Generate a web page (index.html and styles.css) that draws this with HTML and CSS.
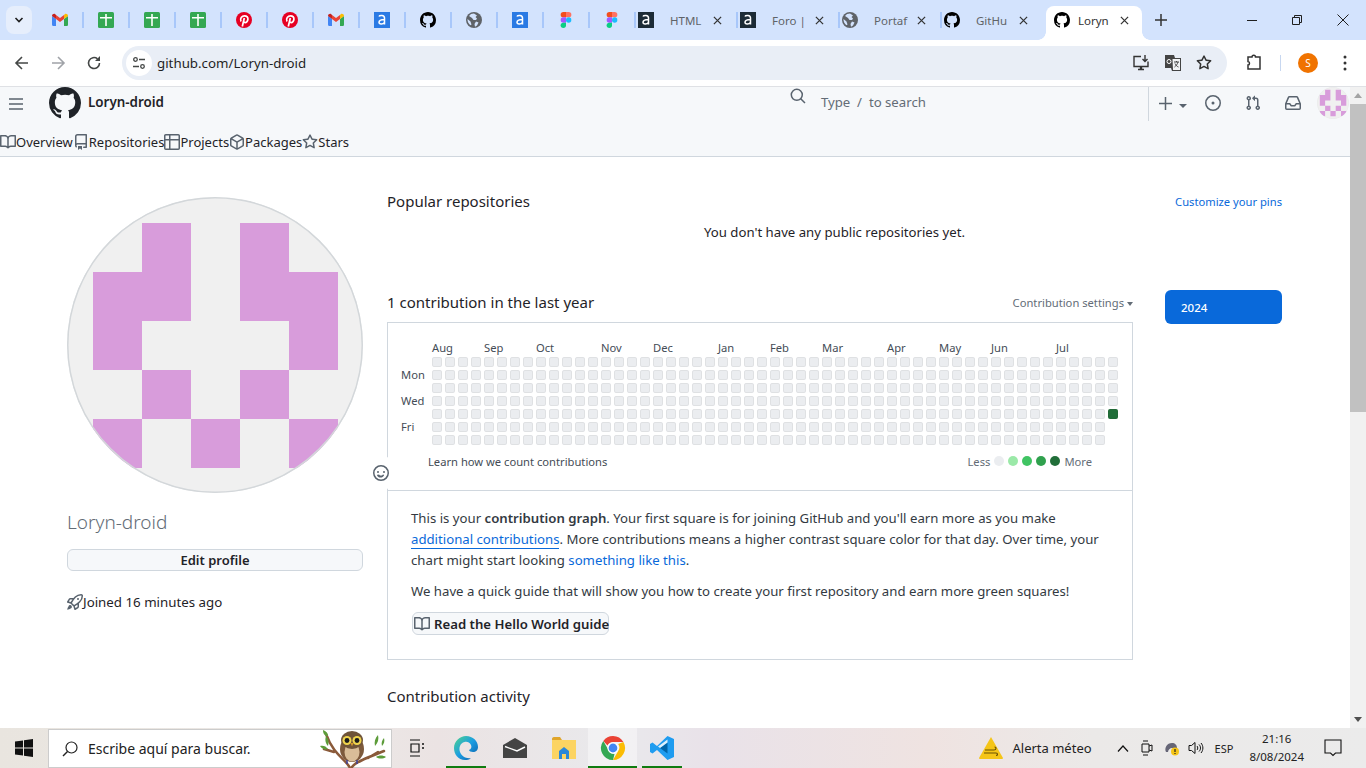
FILE: index.html
```html
<!DOCTYPE html>
<html lang="es">

<head>
    <meta charset="UTF-8" />
    <meta name="viewport" content="width=device-width, initial-scale=1.0" />
    <title>Loryn-droid</title>
    <link rel="stylesheet" href="styles.css">
</head>

<body>
    <!-- Shared icons -->
    <svg class="sprite" aria-hidden="true">
        <symbol id="i-github" viewBox="0 0 16 16"><path d="M8 0c4.42 0 8 3.58 8 8a8.013 8.013 0 0 1-5.45 7.59c-.4.08-.55-.17-.55-.38 0-.27.01-1.13.01-2.2 0-.75-.25-1.23-.54-1.48 1.78-.2 3.65-.88 3.65-3.95 0-.88-.31-1.59-.82-2.15.08-.2.36-1.02-.08-2.12 0 0-.67-.22-2.2.82-.64-.18-1.32-.27-2-.27-.68 0-1.36.09-2 .27-1.53-1.03-2.2-.82-2.2-.82-.44 1.1-.16 1.92-.08 2.12-.51.56-.82 1.28-.82 2.15 0 3.06 1.86 3.75 3.64 3.95-.23.2-.44.55-.51 1.07-.46.21-1.61.55-2.33-.66-.15-.24-.6-.83-1.23-.82-.67.01-.27.38.01.53.34.19.73.9.82 1.13.16.45.68 1.31 2.69.94 0 .67.01 1.3.01 1.49 0 .21-.15.45-.55.38A7.995 7.995 0 0 1 0 8c0-4.42 3.58-8 8-8Z"/></symbol>
        <symbol id="i-book" viewBox="0 0 16 16"><path d="M0 1.75A.75.75 0 0 1 .75 1h4.253c1.227 0 2.317.59 3 1.501A3.743 3.743 0 0 1 11.006 1h4.245a.75.75 0 0 1 .75.75v10.5a.75.75 0 0 1-.75.75h-4.507a2.25 2.25 0 0 0-1.591.659l-.622.621a.75.75 0 0 1-1.06 0l-.622-.621A2.25 2.25 0 0 0 5.258 13H.75a.75.75 0 0 1-.75-.75Zm7.251 10.324.004-5.073-.002-2.253A2.25 2.25 0 0 0 5.003 2.5H1.5v9h3.757a3.75 3.75 0 0 1 1.994.574ZM8.755 4.75l-.004 7.322a3.752 3.752 0 0 1 1.992-.572H14.5v-9h-3.495a2.25 2.25 0 0 0-2.25 2.25Z"/></symbol>
        <symbol id="i-repo" viewBox="0 0 16 16"><path d="M2 2.5A2.5 2.5 0 0 1 4.5 0h8.75a.75.75 0 0 1 .75.75v12.5a.75.75 0 0 1-.75.75h-2.5a.75.75 0 0 1 0-1.5h1.75v-2h-8a1 1 0 0 0-.714 1.7.75.75 0 1 1-1.072 1.05A2.495 2.495 0 0 1 2 11.5Zm10.5-1h-8a1 1 0 0 0-1 1v6.708A2.486 2.486 0 0 1 4.5 9h8ZM5 12.25a.25.25 0 0 1 .25-.25h3.5a.25.25 0 0 1 .25.25v3.25a.25.25 0 0 1-.4.2l-1.45-1.087a.249.249 0 0 0-.3 0L5.4 15.7a.25.25 0 0 1-.4-.2Z"/></symbol>
        <symbol id="i-table" viewBox="0 0 16 16"><path d="M0 1.75C0 .784.784 0 1.75 0h12.5C15.216 0 16 .784 16 1.75v12.5A1.75 1.75 0 0 1 14.25 16H1.75A1.75 1.75 0 0 1 0 14.25ZM6.5 6.5v8h7.75a.25.25 0 0 0 .25-.25V6.5Zm8-1.5V1.75a.25.25 0 0 0-.25-.25H6.5V5Zm-13 1.5v7.75c0 .138.112.25.25.25H5v-8ZM5 5V1.5H1.75a.25.25 0 0 0-.25.25V5Z"/></symbol>
        <symbol id="i-package" viewBox="0 0 16 16"><path d="m8.878.392 5.25 3.045c.54.314.872.89.872 1.514v6.098a1.75 1.75 0 0 1-.872 1.514l-5.25 3.045a1.75 1.75 0 0 1-1.756 0l-5.25-3.045A1.75 1.75 0 0 1 1 11.049V4.951c0-.624.332-1.201.872-1.514L7.122.392a1.75 1.75 0 0 1 1.756 0ZM7.875 1.69l-4.63 2.685L8 7.133l4.755-2.758-4.63-2.685a.248.248 0 0 0-.25 0ZM2.5 5.677v5.372c0 .09.047.171.125.216l4.625 2.683V8.432Zm6.25 8.271 4.625-2.683a.25.25 0 0 0 .125-.216V5.677L8.75 8.432Z"/></symbol>
        <symbol id="i-star" viewBox="0 0 16 16"><path d="M8 .25a.75.75 0 0 1 .673.418l1.882 3.815 4.21.612a.75.75 0 0 1 .416 1.279l-3.046 2.97.719 4.192a.751.751 0 0 1-1.088.791L8 12.347l-3.766 1.98a.75.75 0 0 1-1.088-.79l.72-4.194L.818 6.374a.75.75 0 0 1 .416-1.28l4.21-.611L7.327.668A.75.75 0 0 1 8 .25Zm0 2.445L6.615 5.5a.75.75 0 0 1-.564.41l-3.097.45 2.24 2.184a.75.75 0 0 1 .216.664l-.528 3.084 2.769-1.456a.75.75 0 0 1 .698 0l2.77 1.456-.53-3.084a.75.75 0 0 1 .216-.664l2.24-2.183-3.096-.45a.75.75 0 0 1-.564-.41L8 2.694Z"/></symbol>
        <symbol id="i-rocket" viewBox="0 0 16 16"><path d="M14.064 0h.186C15.216 0 16 .784 16 1.75v.186a8.752 8.752 0 0 1-2.564 6.186l-.458.459c-.314.314-.641.616-.979.904v3.207c0 .608-.315 1.172-.833 1.49l-2.774 1.707a.749.749 0 0 1-1.11-.418l-.954-3.102a1.214 1.214 0 0 1-.145-.125L3.754 9.816a1.218 1.218 0 0 1-.124-.145L.528 8.717a.749.749 0 0 1-.418-1.11l1.71-2.774A1.748 1.748 0 0 1 3.31 4h3.204c.288-.338.59-.665.904-.979l.459-.458A8.749 8.749 0 0 1 14.064 0ZM8.938 3.623h-.002l-.458.458c-.76.76-1.437 1.598-2.02 2.5l-1.5 2.317 2.143 2.143 2.317-1.5c.902-.583 1.74-1.26 2.499-2.02l.459-.458a7.25 7.25 0 0 0 2.123-5.127V1.75a.25.25 0 0 0-.25-.25h-.186a7.249 7.249 0 0 0-5.125 2.123ZM3.56 14.56c-.732.732-2.334 1.045-3.005 1.148a.234.234 0 0 1-.201-.064.234.234 0 0 1-.064-.201c.103-.671.416-2.273 1.15-3.003a1.75 1.75 0 1 1 2.12 2.12Zm6.94-3.935c-.088.06-.177.118-.266.175l-2.35 1.521.548 1.783 1.949-1.2a.25.25 0 0 0 .119-.213ZM3.678 8.116 5.2 5.766c.058-.09.117-.178.176-.266H3.309a.25.25 0 0 0-.213.119l-1.2 1.95ZM12 5a1 1 0 1 1-2 0 1 1 0 0 1 2 0Z"/></symbol>
        <symbol id="i-issue" viewBox="0 0 16 16"><path d="M8 9.5a1.5 1.5 0 1 0 0-3 1.5 1.5 0 0 0 0 3Z"/><path d="M8 0a8 8 0 1 1 0 16A8 8 0 0 1 8 0ZM1.5 8a6.5 6.5 0 1 0 13 0 6.5 6.5 0 0 0-13 0Z"/></symbol>
        <symbol id="i-pr" viewBox="0 0 16 16"><path d="M1.5 3.25a2.25 2.25 0 1 1 3 2.122v5.256a2.251 2.251 0 1 1-1.5 0V5.372A2.25 2.25 0 0 1 1.5 3.25Zm5.677-.177L9.573.677A.25.25 0 0 1 10 .854V2.5h1A2.5 2.5 0 0 1 13.5 5v5.628a2.251 2.251 0 1 1-1.5 0V5a1 1 0 0 0-1-1h-1v1.646a.25.25 0 0 1-.427.177L7.177 3.427a.25.25 0 0 1 0-.354ZM3.75 2.5a.75.75 0 1 0 0 1.5.75.75 0 0 0 0-1.5Zm0 9.5a.75.75 0 1 0 0 1.5.75.75 0 0 0 0-1.5Zm8.25.75a.75.75 0 1 0 1.5 0 .75.75 0 0 0-1.5 0Z"/></symbol>
        <symbol id="i-inbox" viewBox="0 0 16 16"><path d="M2.8 2.06A1.75 1.75 0 0 1 4.41 1h7.18c.7 0 1.333.417 1.61 1.06l2.74 6.395c.04.093.06.194.06.295v4.5A1.75 1.75 0 0 1 14.25 15H1.75A1.75 1.75 0 0 1 0 13.25v-4.5c0-.101.02-.202.06-.295Zm1.61.44a.25.25 0 0 0-.23.152L1.887 8H4.75a.75.75 0 0 1 .6.3L6.625 10h2.75l1.275-1.7a.75.75 0 0 1 .6-.3h2.863L11.82 2.652a.25.25 0 0 0-.23-.152Zm10.09 7h-2.875l-1.275 1.7a.75.75 0 0 1-.6.3h-3.5a.75.75 0 0 1-.6-.3L4.375 9.5H1.5v3.75c0 .138.112.25.25.25h12.5a.25.25 0 0 0 .25-.25Z"/></symbol>
        <symbol id="i-smiley" viewBox="0 0 16 16"><path d="M8 0a8 8 0 1 1 0 16A8 8 0 0 1 8 0ZM1.5 8a6.5 6.5 0 1 0 13 0 6.5 6.5 0 0 0-13 0Zm3.82 1.636a.75.75 0 0 1 1.038.175l.007.009c.103.118.22.222.35.31.264.178.683.37 1.285.37.602 0 1.02-.192 1.285-.371.13-.088.247-.192.35-.31l.007-.008a.75.75 0 0 1 1.222.87c-.16.23-.7.9-1.254 1.29-.63.418-1.37.638-2.127.629-.946 0-1.652-.308-2.126-.63a3.331 3.331 0 0 1-.715-.657.75.75 0 0 1 .683-1.677ZM12 7a1 1 0 1 1-2 0 1 1 0 0 1 2 0ZM5 8a1 1 0 1 1 0-2 1 1 0 0 1 0 2Z"/></symbol>
        <symbol id="f-gmail" viewBox="0 0 16 16"><path fill="#4285f4" d="M1 14h3V7L0 4v8.5C0 13.3.7 14 1 14Z"/><path fill="#34a853" d="M12 14h3c.6 0 1-.7 1-1.5V4l-4 3Z"/><path fill="#ea4335" d="M4 7V3l4 3 4-3v4L8 10Z"/><path fill="#c5221f" d="M0 4c0-2 2-2.600 3-2l1 1v4Z"/><path fill="#fbbc04" d="M12 3l1-1c1-.6 3 0 3 2l-4 3Z"/></symbol>
        <symbol id="f-sheet" viewBox="0 0 16 16"><rect width="16" height="16" rx="1.500" fill="#34a853"/><path fill="#fff" d="M2 5h5.200V2h1.600v3H14v1.500H8.800V14H7.200V6.500H2Z"/></symbol>
        <symbol id="f-pin" viewBox="0 0 16 16"><circle cx="8" cy="8" r="8" fill="#e60023"/><path fill="none" stroke="#fff" stroke-width="1.700" d="M5 9.500C3.500 6.500 6 3.800 8.500 3.800c2.400 0 3.700 1.700 3.400 3.700-.3 2-1.700 3.300-3 3-1-.2-1.300-1-1.100-2M8.300 6 6.300 14.500"/></symbol>
        <symbol id="f-alura" viewBox="0 0 16 16"><rect width="16" height="16" fill="#2a7ae4"/><path fill="none" stroke="#fff" stroke-width="1.500" d="M5 4.500c.5-1.300 5.500-1.800 5.500 1.500v6.500M10.500 7.500C7 7.500 5 8.500 5 10.300c0 2.200 4 2.300 5.500.2"/></symbol>
        <symbol id="f-alura-dark" viewBox="0 0 16 16"><rect width="16" height="16" fill="#1c2b36"/><path fill="none" stroke="#fff" stroke-width="1.500" d="M5 4.500c.5-1.300 5.500-1.800 5.500 1.500v6.500M10.500 7.500C7 7.500 5 8.500 5 10.300c0 2.200 4 2.300 5.500.2"/></symbol>
        <symbol id="f-globe" viewBox="0 0 16 16"><circle cx="8" cy="8" r="8" fill="#5f6368"/><path fill="#d3e3fd" d="M8 1.500 5 2 3 4l3 2 1.500 2H10l1-1.500L9.500 5 11 3.500ZM10 9.500l2.500 1-1.500 3-2 1.200-.5-2.700ZM1.500 7l3 2.500 1 3-1 .8C2.500 12 1.300 9.500 1.500 7Z"/></symbol>
        <symbol id="f-figma" viewBox="0 0 16 24"><path fill="#f24e1e" d="M8 0H4a4 4 0 0 0 0 8h4Z"/><path fill="#ff7262" d="M8 0h4a4 4 0 0 1 0 8H8Z"/><path fill="#a259ff" d="M8 8H4a4 4 0 0 0 0 8h4Z"/><circle cx="12" cy="12" r="4" fill="#1abcfe"/><path fill="#0acf83" d="M8 16H4a4 4 0 1 0 4 4Z"/></symbol>
        <symbol id="i-close" viewBox="0 0 10 10"><path fill="none" stroke="currentColor" stroke-width="1.400" d="m1 1 8 8M9 1 1 9"/></symbol>
    </svg>

    <div class="screen">
        <!-- Browser tabs -->
        <div class="tabstrip">
            <button class="tab-search" aria-label="Buscar pestañas">
                <svg width="10" height="10" viewBox="0 0 10 10"><path fill="none" stroke="#1f1f1f" stroke-width="1.600" d="m1.500 3 3.500 3.500L8.500 3"/></svg>
            </button>
            <div class="tab tab-pinned"><svg class="fav"><use href="#f-gmail"/></svg></div>
            <div class="tab tab-pinned"><svg class="fav"><use href="#f-sheet"/></svg></div>
            <div class="tab tab-pinned"><svg class="fav"><use href="#f-sheet"/></svg></div>
            <div class="tab tab-pinned"><svg class="fav"><use href="#f-sheet"/></svg></div>
            <div class="tab tab-pinned"><svg class="fav"><use href="#f-pin"/></svg></div>
            <div class="tab tab-pinned"><svg class="fav"><use href="#f-pin"/></svg></div>
            <div class="tab tab-pinned"><svg class="fav"><use href="#f-gmail"/></svg></div>
            <div class="tab tab-pinned"><svg class="fav"><use href="#f-alura"/></svg></div>
            <div class="tab tab-pinned"><svg class="fav"><use href="#i-github"/></svg></div>
            <div class="tab tab-pinned"><svg class="fav"><use href="#f-globe"/></svg></div>
            <div class="tab tab-pinned"><svg class="fav"><use href="#f-alura"/></svg></div>
            <div class="tab tab-pinned"><svg class="fav"><use href="#f-figma"/></svg></div>
            <div class="tab tab-pinned"><svg class="fav"><use href="#f-figma"/></svg></div>
            <div class="tab"><svg class="fav"><use href="#f-alura-dark"/></svg><span class="tab-title">HTML</span><svg class="tab-close"><use href="#i-close"/></svg></div>
            <div class="tab"><svg class="fav"><use href="#f-alura-dark"/></svg><span class="tab-title">Foro |</span><svg class="tab-close"><use href="#i-close"/></svg></div>
            <div class="tab"><svg class="fav"><use href="#f-globe"/></svg><span class="tab-title">Portaf</span><svg class="tab-close"><use href="#i-close"/></svg></div>
            <div class="tab"><svg class="fav"><use href="#i-github"/></svg><span class="tab-title">GitHu</span><svg class="tab-close"><use href="#i-close"/></svg></div>
            <div class="tab tab-active"><svg class="fav"><use href="#i-github"/></svg><span class="tab-title">Loryn</span><svg class="tab-close"><use href="#i-close"/></svg></div>
            <svg class="new-tab" width="12" height="12" viewBox="0 0 12 12"><path fill="none" stroke="#333" stroke-width="1.500" d="M6 0v12M0 6h12"/></svg>
            <div class="window-controls">
                <svg width="10" height="10" viewBox="0 0 10 10"><path stroke="#1f1f1f" d="M0 5.500h10"/></svg>
                <svg width="10" height="10" viewBox="0 0 10 10"><path fill="none" stroke="#1f1f1f" d="M.5 2.500h7v7h-7ZM2.500 2.500v-2h7v7h-2"/></svg>
                <svg width="12" height="12" viewBox="0 0 12 12"><path fill="none" stroke="#1f1f1f" d="m.5.500 11 11M11.500.500l-11 11"/></svg>
            </div>
        </div>

        <!-- Browser toolbar -->
        <div class="toolbar">
            <svg class="tool" width="16" height="16" viewBox="0 0 16 16"><path fill="none" stroke="#444746" stroke-width="1.600" d="M14 8H2.500M8 2 2 8l6 6"/></svg>
            <svg class="tool" width="16" height="16" viewBox="0 0 16 16"><path fill="none" stroke="#a0a3a8" stroke-width="1.600" d="M2 8h11.500M8 2l6 6-6 6"/></svg>
            <svg class="tool" width="16" height="16" viewBox="0 0 16 16"><path fill="none" stroke="#444746" stroke-width="1.600" d="M13.500 8A5.500 5.500 0 1 1 11.500 3.800"/><path fill="#444746" d="M14 1v5H9Z"/></svg>
            <div class="omnibox">
                <span class="site-info">
                    <svg width="14" height="14" viewBox="0 0 14 14"><g fill="none" stroke="#444746" stroke-width="1.300"><circle cx="3.500" cy="3.500" r="1.800"/><circle cx="10.500" cy="10.500" r="1.800"/><path d="M7 3.500h6M1 10.500h6"/></g></svg>
                </span>
                <span class="url">github.com/Loryn-droid</span>
                <span class="omni-icons">
                    <svg width="18" height="18" viewBox="0 0 18 18"><path fill="none" stroke="#333" stroke-width="1.400" d="M9 2.500H2v10h14v-5M6 15.500h6"/><path stroke="#333" stroke-width="2.400" d="M9 13v2.500"/><path fill="none" stroke="#333" stroke-width="1.400" d="M13 1v6M10.500 5 13 7.500 15.500 5"/></svg>
                    <svg width="18" height="18" viewBox="0 0 18 18"><path fill="#444" d="M1 1h9l1 3h6v13H8l-1-3H1Z"/><path fill="#f1f3f4" d="M8.500 5H16v11H9Z"/><path fill="none" stroke="#444" d="M10 8h5M12.500 7v1M14 8c-.5 2-2 4-3.500 5M11 9.500c.7 1.500 2 3 3.500 3.500"/><circle cx="5" cy="7.500" r="2" fill="none" stroke="#fff"/></svg>
                    <svg width="16" height="16"><use href="#i-star" fill="#333"/></svg>
                </span>
            </div>
            <svg class="ext" width="18" height="18" viewBox="0 0 18 18"><path fill="none" stroke="#333" stroke-width="1.500" d="M3 3h4c0-2.500 3.500-2.500 3.500 0H15v12H3v-4c2 0 2-3.500 0-3.500Z"/></svg>
            <span class="toolbar-sep"></span>
            <span class="account">S</span>
            <svg class="kebab" width="4" height="16" viewBox="0 0 4 16"><circle cx="2" cy="2" r="1.500"/><circle cx="2" cy="8" r="1.500"/><circle cx="2" cy="14" r="1.500"/></svg>
        </div>

        <!-- Page with scrollbar -->
        <div class="viewport">
            <div class="page">
                <header class="gh-header">
                    <div class="gh-top">
                        <svg class="burger" width="14" height="12" viewBox="0 0 14 12"><path stroke="#59636e" stroke-width="1.400" d="M0 1h14M0 6h14M0 11h14"/></svg>
                        <svg class="gh-logo"><use href="#i-github"/></svg>
                        <strong class="gh-user">Loryn-droid</strong>
                        <div class="gh-search">
                            <svg class="gh-search-icon" width="16" height="16" viewBox="0 0 16 16"><path fill="none" stroke="#59636e" stroke-width="1.500" d="M10.500 10.500 15 15"/><circle cx="6.800" cy="6.800" r="5.500" fill="none" stroke="#59636e" stroke-width="1.500"/></svg>
                            <span class="gh-search-text">Type &nbsp;/&nbsp; to search</span>
                        </div>
                        <div class="gh-actions">
                            <span class="gh-plus">
                                <svg width="13" height="13" viewBox="0 0 13 13"><path stroke="#59636e" stroke-width="1.500" d="M6.500 0v13M0 6.500h13"/></svg>
                                <svg class="gh-plus-caret" width="8" height="4" viewBox="0 0 8 4"><path fill="#59636e" d="M0 0h8L4 4Z"/></svg>
                            </span>
                            <svg class="gh-action"><use href="#i-issue"/></svg>
                            <svg class="gh-action"><use href="#i-pr"/></svg>
                            <svg class="gh-action"><use href="#i-inbox"/></svg>
                            <svg class="identicon identicon-small" viewBox="0 0 296 296"><use href="#identicon-art"/></svg>
                        </div>
                    </div>
                    <nav class="gh-nav">
                        <a href="#"><svg class="nav-icon"><use href="#i-book"/></svg>Overview</a>
                        <a href="#"><svg class="nav-icon"><use href="#i-repo"/></svg>Repositories</a>
                        <a href="#"><svg class="nav-icon"><use href="#i-table"/></svg>Projects</a>
                        <a href="#"><svg class="nav-icon"><use href="#i-package"/></svg>Packages</a>
                        <a href="#"><svg class="nav-icon"><use href="#i-star"/></svg>Stars</a>
                    </nav>
                </header>

                <div class="profile">
                    <aside class="sidebar">
                        <svg class="identicon identicon-large" viewBox="0 0 296 296">
                            <g id="identicon-art">
                                <rect width="296" height="296" fill="#f0f0f0"/>
                                <path fill="#d89cdb" d="M75 26h49v49H75ZM173 26h49v49h-49ZM26 75h98v49H26ZM173 75h98v49h-98ZM26 124h49v49H26ZM222 124h49v49h-49ZM75 173h49v49H75ZM173 173h49v49h-49ZM26 222h49v49H26ZM124 222h49v49h-49ZM222 222h49v49h-49Z"/>
                                <circle cx="148" cy="148" r="147.500" fill="none" stroke="#d3d7da" stroke-width="2"/>
                            </g>
                        </svg>
                        <h1 class="profile-name">Loryn-droid</h1>
                        <button class="btn btn-block">Edit profile</button>
                        <p class="joined"><svg class="nav-icon"><use href="#i-rocket"/></svg>Joined 16 minutes ago</p>
                    </aside>

                    <main class="content">
                        <div class="pins-head">
                            <h2 class="section-title">Popular repositories</h2>
                            <a class="pins-link" href="#">Customize your pins</a>
                        </div>
                        <p class="empty-note">You don't have any public repositories yet.</p>

                        <div class="contrib">
                            <div class="contrib-main">
                                <div class="contrib-head">
                                    <h2 class="section-title">1 contribution in the last year</h2>
                                    <span class="contrib-settings">Contribution settings<i class="caret"></i></span>
                                </div>
                                <div class="graph-box">
                                    <div class="graph-top">
                                        <div class="calendar" id="calendar"></div>
                                        <div class="graph-foot">
                                            <span>Learn how we count contributions</span>
                                            <span class="legend">Less
                                                <i class="swatch level-0"></i><i class="swatch level-1"></i><i class="swatch level-2"></i><i class="swatch level-3"></i><i class="swatch level-4"></i>
                                                More</span>
                                        </div>
                                    </div>
                                    <span class="emoji-btn"><svg class="nav-icon"><use href="#i-smiley"/></svg></span>
                                    <div class="graph-tip">
                                        <p>This is your <b>contribution graph</b>. Your first square is for joining GitHub and you'll earn more as you make <a class="link-under" href="#">additional contributions</a>. More contributions means a higher contrast square color for that day. Over time, your chart might start looking <a href="#">something like this</a>.</p>
                                        <p>We have a quick guide that will show you how to create your first repository and earn more green squares!</p>
                                        <button class="btn btn-guide"><svg class="nav-icon"><use href="#i-book"/></svg>Read the Hello World guide</button>
                                    </div>
                                </div>
                            </div>
                            <div class="year-list"><span class="year-active">2024</span></div>
                        </div>

                        <h2 class="section-title activity-title">Contribution activity</h2>
                    </main>
                </div>
            </div>
            <div class="scrollbar">
                <i class="arrow-up"></i>
                <span class="thumb"></span>
                <i class="arrow-down"></i>
            </div>
        </div>

        <!-- Windows taskbar -->
        <footer class="taskbar">
            <svg class="start" width="18" height="18" viewBox="0 0 18 18"><path fill="#111" d="M0 2.500 8 1.400v7.100H0ZM9 1.300 18 0v8.500H9ZM0 9.500h8v7.100L0 15.500ZM9 9.500h9V18L9 16.700Z"/></svg>
            <div class="task-search">
                <svg width="16" height="16" viewBox="0 0 16 16"><circle cx="9.500" cy="6.500" r="5.500" fill="none" stroke="#222" stroke-width="1.200"/><path stroke="#222" stroke-width="1.400" d="M5.500 10.500 1 15"/></svg>
                <span>Escribe aquí para buscar.</span>
                <svg class="owl" width="68" height="38" viewBox="0 0 68 38">
                    <path fill="none" stroke="#8a5a3a" stroke-width="2.500" stroke-linecap="round" d="M30 38C26 29 14 26 6 4M32 37c4-6 18-10 32-16M14 22 4 19M48 28l10-6"/>
                    <path fill="#5d9c3a" d="M3 0c3 1 5 3 5 6-3 0-5-2-5-6ZM6 6c3 3 3 6 2 10-3-3-3-7-2-10ZM58 5c1 4 0 8-3 11-1-4 0-8 3-11ZM64 8c1 3 0 6-2 8-1-3 0-6 2-8ZM0 16c3-1 6 0 8 3-3 1-6 0-8-3ZM56 27c3-2 7-2 10 0-3 2-7 2-10 0Z"/>
                    <ellipse cx="32" cy="19" rx="12" ry="13" fill="#7d5a3c"/>
                    <ellipse cx="32" cy="22" rx="7.500" ry="9.500" fill="#d9bd98"/>
                    <ellipse cx="32" cy="10" rx="11" ry="9" fill="#6f5338"/>
                    <circle cx="27" cy="10.500" r="4.500" fill="#efd34c"/><circle cx="37" cy="10.500" r="4.500" fill="#efd34c"/>
                    <circle cx="27" cy="10.500" r="2.400" fill="#1c1c1c"/><circle cx="37" cy="10.500" r="2.400" fill="#1c1c1c"/>
                    <path fill="#d99a2b" d="m30.500 13 1.500 3.500 1.500-3.500Z"/>
                    <path stroke="#3c3f9a" stroke-width="1.500" d="M27 30v4M37 30v4"/>
                </svg>
            </div>
            <div class="task-app task-view">
                <svg width="16" height="18" viewBox="0 0 16 18"><path fill="none" stroke="#111" stroke-width="1.200" d="M1 1h10M1 17h10M2 5h8v8H2Z"/><path stroke="#111" stroke-width="1.500" d="M14 4v2M14 8v2"/></svg>
            </div>
            <div class="task-app task-open">
                <svg width="26" height="26" viewBox="0 0 26 26"><defs><linearGradient id="edge" x1="0" y1="0" x2="1" y2="1"><stop offset="0" stop-color="#4fd58a"/><stop offset=".5" stop-color="#1b9de2"/><stop offset="1" stop-color="#0c59a4"/></linearGradient></defs><path fill="url(#edge)" d="M13 1c7 0 12 5 12 11 0 3-2 5-5 5-2 0-4-1-4-2 2-1 3-2.500 2-5C16.500 7 14 6.500 11.500 7 7 8 5.500 13 7 17c1.500 4 6 7 11 6-2 2-4 2-6 2C5 25 1 19 1 13 1 6 7 1 13 1Z"/></svg>
            </div>
            <div class="task-app">
                <svg width="24" height="20" viewBox="0 0 24 20"><path fill="#444" d="M0 7 12 0l12 7v13H0Z"/><path fill="none" stroke="#fff" stroke-width="1.400" d="M2 8.500 14 13 22 9"/></svg>
            </div>
            <div class="task-app">
                <svg width="24" height="22" viewBox="0 0 24 22"><path fill="#e0a52a" d="M0 2c0-1 .500-2 2-2h6l2 3h-10Z"/><path fill="#fcd462" d="M0 3h24v19H0Z"/><path fill="#2b88d8" d="M7 14l5-4 5 4v8h-3v-5h-4v5H7Z"/></svg>
            </div>
            <div class="task-app task-open task-chrome">
                <svg width="26" height="26" viewBox="0 0 26 26"><path fill="#ea4335" d="M13 1a12 12 0 0 1 10.400 6H13a6 6 0 0 0-5.500 3.600L3.300 5.900A12 12 0 0 1 13 1Z"/><path fill="#fbbc04" d="M23.400 7A12 12 0 0 1 13 25l5.200-9a6 6 0 0 0 0-7Z"/><path fill="#34a853" d="M3.300 5.900 8.500 15a6 6 0 0 0 6 4l-1.500 6A12 12 0 0 1 3.300 5.900Z"/><circle cx="13" cy="13" r="5" fill="#4285f4" stroke="#fff" stroke-width="1.200"/></svg>
            </div>
            <div class="task-app task-open">
                <svg width="24" height="24" viewBox="0 0 24 24"><path fill="#1f9cf0" d="M17.500 0 24 3v18l-6.500 3L7 14l-4.500 3.500L0 16V8l2.500-1.500L7 10Z"/><path fill="#0065a9" d="M17.500 6.500v11L10 12Z"/><path fill="#fff" opacity=".85" d="M17.500 6.500 10 12l-2-1.500L17.500 3.500Z"/></svg>
            </div>

            <div class="tray">
                <svg width="24" height="22" viewBox="0 0 24 22"><path fill="#f5c518" d="M12 0 24 21a1 1 0 0 1-1 1H1a1 1 0 0 1-1-1Z"/><path fill="none" stroke="#6b5200" stroke-width="1.200" d="M6 13h9c2.500 0 2.500-3 .5-3M5 16h12c2 0 2 2.500 0 2.500"/></svg>
                <span class="tray-alert">Alerta méteo</span>
                <svg class="tray-chevron" width="12" height="7" viewBox="0 0 12 7"><path fill="none" stroke="#111" stroke-width="1.200" d="m1 6.500 5-5.500 5 5.500"/></svg>
                <svg class="tray-icon tray-meet" width="12" height="16" viewBox="0 0 12 16"><path fill="none" stroke="#111" d="M1 4h7v8H1ZM8 6l3-1v6l-3-1M2 1h5M2 15h5"/></svg>
                <svg class="tray-icon tray-cloud" width="16" height="16" viewBox="0 0 16 16"><path fill="#667" d="M2 12c-2-4 1-9 6-9 3 0 5 2 5 5H8c-2 0-4 2-4 4Z"/><circle cx="11" cy="11.500" r="4" fill="#f5c518"/><path stroke="#222" stroke-width="1.200" d="M11 9v3M11 13v1"/></svg>
                <svg class="tray-icon tray-sound" width="16" height="16" viewBox="0 0 16 16"><path fill="none" stroke="#111" d="M1 5.500h2.500L7 2.500v11l-3.500-3H1ZM9 6c1 1 1 3 0 4M11 4.500c2 2 2 5 0 7M13 3c2.500 3 2.500 7 0 10"/></svg>
                <span class="tray-lang">ESP</span>
                <span class="tray-clock"><span>21:16</span><span>8/08/2024</span></span>
                <svg class="tray-notify" width="18" height="18" viewBox="0 0 18 18"><path fill="none" stroke="#111" stroke-width="1.100" d="M1 1h16v13h-5.500L9 16.500 6.500 14H1Z"/></svg>
            </div>
        </footer>
    </div>

    <script src="graph.js"></script>
</body>

</html>
```

FILE: styles.css
```css
/* Colors used by the GitHub page */
:root {
    --fg: #1f2328;
    --fg-muted: #636c76;
    --border: #d0d7de;
    --link: #0969da;
    --tabstrip: #d3e3fd;
}

* {
    box-sizing: border-box;
}

html,
body {
    margin: 0;
    height: 100%;
    overflow: hidden;
}

body {
    font-family: "Noto Sans", "Open Sans", sans-serif;
    font-size: 13.2px;
    color: var(--fg);
    background: #fff;
}

a {
    color: var(--link);
    text-decoration: none;
}

h1,
h2,
p {
    margin: 0;
    font-weight: 400;
}

.sprite {
    display: none;
}

.screen {
    display: flex;
    flex-direction: column;
    height: 768px;
}

/* Tabs */
.tabstrip {
    display: flex;
    align-items: center;
    flex: 0 0 40px;
    background: var(--tabstrip);
    padding-left: 6px;
}

.tab-search {
    all: unset;
    display: flex;
    align-items: center;
    justify-content: center;
    flex: 0 0 26px;
    height: 28px;
    margin-right: 5px;
    border-radius: 8px;
    background: #e6eefc;
}

.tab {
    display: flex;
    align-items: center;
    position: relative;
    flex: 0 0 102px;
    height: 34px;
    margin-top: 6px;
    padding: 0 15px 6px 3px;
    color: #5f6368;
    font-size: 11.5px;
}

/* Separator between tabs */
.tab::before {
    content: "";
    position: absolute;
    left: -1px;
    top: 6px;
    height: 16px;
    width: 2px;
    background: #a8c7fa;
}

.tab:first-of-type::before {
    display: none;
}

.tab-pinned {
    flex-basis: 46px;
    justify-content: center;
    padding: 0 0 6px;
}

.fav {
    flex: none;
    width: 16px;
    height: 16px;
}

.tab-title {
    flex: 1;
    margin-left: 16px;
    overflow: hidden;
    white-space: nowrap;
}

.tab-close {
    flex: none;
    width: 9px;
    height: 9px;
    color: #333;
}

.tab-active {
    flex-basis: 96px;
    margin-left: 3px;
    padding-left: 8px;
    padding-right: 13px;
    background: #fff;
    border-radius: 8px 8px 0 0;
    color: #333;
}

.tab-active .tab-title {
    margin-left: 8px;
}

/* Curved feet of the active tab */
.tab-active::before,
.tab-active::after {
    content: "";
    position: absolute;
    top: auto;
    bottom: 0;
    width: 8px;
    height: 8px;
}

.tab-active::before {
    left: -8px;
    background: radial-gradient(circle at 0 0, transparent 7.5px, #fff 8px);
}

.tab-active::after {
    right: -8px;
    background: radial-gradient(circle at 100% 0, transparent 7.5px, #fff 8px);
}

.tab-active + .new-tab {
    margin-left: 13px;
}

.window-controls {
    display: flex;
    align-items: center;
    gap: 35px;
    margin-left: auto;
    padding-right: 17px;
}

/* Toolbar */
.toolbar {
    display: flex;
    align-items: center;
    flex: 0 0 47px;
    background: #fff;
    border-bottom: 1px solid #dfe1e5;
    padding-left: 14px;
}

.tool {
    flex: none;
    margin-right: 20px;
}

.tool:nth-child(3) {
    margin-right: 21px;
}

.omnibox {
    display: flex;
    align-items: center;
    flex: 0 0 1105px;
    height: 34px;
    margin-left: -1px;
    border-radius: 17px;
    background: #e9eef6;
    padding: 0 15px 0 4px;
}

.site-info {
    display: flex;
    align-items: center;
    justify-content: center;
    width: 26px;
    height: 26px;
    border-radius: 50%;
    background: #fff;
}

.url {
    margin-left: 5px;
    color: #1f1f1f;
    font-size: 13.3px;
}

.omni-icons {
    display: flex;
    align-items: center;
    gap: 14px;
    margin-left: auto;
}

.ext {
    margin-left: 18px;
    flex: none;
}

.toolbar-sep {
    width: 1px;
    height: 16px;
    margin: 0 17px;
    background: #c7d7f0;
}

.account {
    display: flex;
    align-items: center;
    justify-content: center;
    width: 20px;
    height: 20px;
    border-radius: 50%;
    background: #f07300;
    color: #fff;
    font-size: 10px;
}

.kebab {
    margin-left: 25px;
    fill: #333;
}

/* Viewport */
.viewport {
    display: flex;
    flex: 1;
    min-height: 0;
}

.page {
    flex: 1;
    min-width: 0;
    overflow: hidden;
}

.scrollbar {
    display: flex;
    flex-direction: column;
    align-items: center;
    flex: 0 0 16px;
    background: #f1f1f1;
    padding-top: 6px;
}

.thumb {
    width: 100%;
    height: 308px;
    margin-top: 6px;
    background: #c1c1c1;
}

.arrow-up,
.arrow-down {
    width: 0;
    height: 0;
    border-left: 4px solid transparent;
    border-right: 4px solid transparent;
}

.arrow-up {
    border-bottom: 5px solid #a3a3a3;
}

.arrow-down {
    margin-top: auto;
    margin-bottom: 6px;
    border-top: 5px solid #505050;
}

/* GitHub header */
.gh-header {
    height: 70px;
    background: #f6f8fa;
    border-bottom: 1px solid var(--border);
}

.gh-top {
    display: flex;
    align-items: flex-start;
    height: 38px;
    padding-left: 9px;
}

.burger {
    margin-top: 11px;
}

.gh-logo {
    width: 32px;
    height: 32px;
    margin-left: 26px;
    fill: var(--fg);
}

.gh-user {
    margin-left: 7px;
    margin-top: 6px;
    font-size: 13.4px;
    font-weight: 600;
}

.gh-search {
    display: flex;
    flex: 0 0 359px;
    height: 34px;
    margin-left: 626px;
    border-right: 1px solid var(--border);
    color: var(--fg-muted);
}

.gh-search-icon {
    margin-top: 1px;
}

.gh-search-text {
    margin-left: 15px;
    margin-top: 6px;
}

.gh-actions {
    display: flex;
    align-items: center;
    margin-left: 10px;
    height: 32px;
}

.gh-plus {
    display: flex;
    align-items: center;
    gap: 7px;
}

.gh-plus-caret {
    margin-top: 5px;
}

.gh-action {
    width: 16px;
    height: 16px;
    margin-left: 24px;
    fill: #59636e;
}

.gh-plus + .gh-action {
    margin-left: 18px;
}

.identicon {
    border-radius: 50%;
}

.identicon-small {
    width: 32px;
    height: 32px;
    margin-left: 16px;
}

.gh-nav {
    display: flex;
    align-items: center;
    height: 31px;
    padding-top: 2px;
    font-size: 13px;
}

.gh-nav a {
    display: flex;
    align-items: center;
    color: var(--fg);
}

.nav-icon {
    flex: none;
    width: 16px;
    height: 16px;
    fill: #59636e;
}

/* Profile layout */
.profile {
    display: flex;
    gap: 24px;
    padding: 34px 68px 0 67px;
}

.sidebar {
    flex: 0 0 296px;
    margin-top: 6px;
}

.identicon-large {
    display: block;
    width: 296px;
    height: 296px;
}

.profile-name {
    margin-top: 16px;
    color: var(--fg-muted);
    font-size: 19px;
    font-weight: 300;
    line-height: 27px;
}

.btn {
    border: 1px solid var(--border);
    border-radius: 6px;
    background: #f6f8fa;
    color: var(--fg);
    font-family: inherit;
    font-size: 13.2px;
    font-weight: 600;
}

.btn-block {
    display: block;
    width: 100%;
    height: 22px;
    margin-top: 13px;
    padding: 0;
    font-size: 13px;
    line-height: 18px;
}

.joined {
    display: flex;
    align-items: center;
    margin-top: 21px;
    font-size: 13.3px;
    line-height: 20px;
}

.content {
    flex: 1;
    min-width: 0;
}

.pins-head {
    display: flex;
    align-items: center;
    justify-content: space-between;
    height: 20px;
}

.section-title {
    font-size: 15px;
    line-height: 20px;
}

.pins-link {
    font-size: 11.2px;
}

.empty-note {
    margin-top: 11px;
    text-align: center;
    line-height: 20px;
}

/* Contributions */
.contrib {
    display: flex;
    gap: 32px;
    margin-top: 48px;
}

.contrib-main {
    flex: 0 0 746px;
    min-width: 0;
}

.contrib-head {
    display: flex;
    align-items: center;
    justify-content: space-between;
    height: 24px;
    margin-bottom: 8px;
}

.contrib-settings {
    color: var(--fg-muted);
    font-size: 11.2px;
}

.caret {
    display: inline-block;
    margin-left: 3px;
    vertical-align: middle;
    border-top: 4px solid #636c76;
    border-left: 3px solid transparent;
    border-right: 3px solid transparent;
}

.graph-box {
    position: relative;
    height: 338px;
    border: 1px solid var(--border);
}

.graph-top {
    height: 168px;
    padding: 17px 14px 0 13px;
    border-bottom: 1px solid var(--border);
    font-size: 11.2px;
}

.calendar {
    display: grid;
    grid-template-columns: 31px repeat(53, 13px);
    grid-template-rows: 17px repeat(7, 13px);
}

.cal-month,
.cal-day {
    color: #444c56;
    white-space: nowrap;
}

.cal-month {
    margin-top: 1px;
    line-height: 14px;
}

.cal-day {
    line-height: 10px;
}

.cal-cell {
    width: 10px;
    height: 10px;
    border-radius: 2px;
    background: #ebedf0;
    outline: 1px solid rgb(27 31 35 / 0.06);
    outline-offset: -1px;
}

.cal-cell.level-4 {
    background: #216e39;
}

.graph-foot {
    display: flex;
    align-items: center;
    justify-content: space-between;
    height: 18px;
    margin: 4px 26px 0 27px;
    color: #444c56;
}

.legend {
    display: flex;
    align-items: center;
    gap: 4px;
    color: var(--fg-muted);
}

.swatch {
    width: 10px;
    height: 10px;
    border-radius: 50%;
}

.level-0 {
    background: #ebedf0;
}

.level-1 {
    background: #9be9a8;
}

.level-2 {
    background: #40c463;
}

.level-3 {
    background: #30a14e;
}

.level-4 {
    background: #216e39;
}

.emoji-btn {
    position: absolute;
    left: -24px;
    top: 133px;
    display: flex;
    align-items: center;
    justify-content: center;
    width: 34px;
    height: 34px;
    border-radius: 50%;
    background: #fff;
}

.graph-tip {
    padding: 17px 23px 0;
    line-height: 21px;
    color: #333a42;
}

.graph-tip p + p {
    margin-top: 10px;
}

.graph-tip b {
    font-weight: 600;
}

.link-under {
    border-bottom: 1px solid var(--link);
}

.btn-guide {
    display: flex;
    align-items: center;
    gap: 4px;
    width: 197px;
    height: 23px;
    margin-top: 10px;
    margin-left: 1px;
    padding: 0 0 0 1px;
    white-space: nowrap;
}

.year-list {
    flex: 1;
}

.year-active {
    display: block;
    height: 34px;
    padding-left: 16px;
    border-radius: 6px;
    background: var(--link);
    color: #fff;
    font-size: 11.5px;
    font-weight: 500;
    line-height: 35px;
}

.activity-title {
    margin-top: 26px;
}

/* Taskbar */
.taskbar {
    display: flex;
    align-items: center;
    flex: 0 0 40px;
    background: linear-gradient(90deg, #e9e5df 0, #ece8e6 25%, #ebe3e3 32%, #e9e9ec 45%, #e9e2e9 52%, #efe3e1 68%, #ebe9e8 80%, #ebebeb 100%);
    padding-left: 15px;
}

.start {
    flex: none;
}

.task-search {
    display: flex;
    align-items: center;
    flex: 0 0 344px;
    height: 39px;
    margin-left: 15px;
    margin-top: 1px;
    padding-left: 13px;
    background: #fff;
    border: 1px solid #ccc;
    font-size: 14px;
    color: #222;
}

.task-search span {
    margin-left: 10px;
}

.owl {
    margin-left: auto;
    margin-right: 3px;
}

.task-app {
    display: flex;
    align-items: center;
    justify-content: center;
    flex: 0 0 49px;
    height: 40px;
}

.task-open {
    background: linear-gradient(#107c10, #107c10) center bottom / 40px 2px no-repeat;
}

.task-chrome {
    background: linear-gradient(#107c10, #107c10) center bottom / 100% 2px no-repeat, rgb(255 255 255 / 0.4);
}

.tray {
    display: flex;
    align-items: center;
    margin-left: auto;
    font-size: 13px;
    color: #222;
}

.tray-alert {
    margin-left: 9px;
}

.tray-chevron {
    margin-left: 25px;
}

.tray-meet {
    margin-left: 12px;
}

.tray-cloud {
    margin-left: 11px;
}

.tray-sound {
    margin-left: 8px;
}

.tray-lang {
    margin-left: 11px;
    font-size: 11px;
}

.tray-clock {
    display: flex;
    flex-direction: column;
    align-items: center;
    gap: 2px;
    margin-left: 16px;
    font-size: 11.5px;
    line-height: 16px;
}

.tray-notify {
    margin-left: 20px;
    margin-right: 24px;
}
```

FILE: graph.js
```js
// Builds the contribution calendar
const calendar = document.querySelector('#calendar');

const months = [
    ['Aug', 0], ['Sep', 4], ['Oct', 8], ['Nov', 13], ['Dec', 17], ['Jan', 22],
    ['Feb', 26], ['Mar', 30], ['Apr', 35], ['May', 39], ['Jun', 43], ['Jul', 48]
];
const days = [['Mon', 1], ['Wed', 3], ['Fri', 5]];

months.forEach(([name, week]) => {
    const label = document.createElement('span');
    label.className = 'cal-month';
    label.textContent = name;
    label.style.gridColumn = `${week + 2} / span 4`;
    label.style.gridRow = '1';
    calendar.appendChild(label);
});

days.forEach(([name, day]) => {
    const label = document.createElement('span');
    label.className = 'cal-day';
    label.textContent = name;
    label.style.gridColumn = '1';
    label.style.gridRow = `${day + 2}`;
    calendar.appendChild(label);
});

for (let week = 0; week < 53; week++) {
    // The last week only goes up to today
    const length = week === 52 ? 5 : 7;
    for (let day = 0; day < length; day++) {
        const cell = document.createElement('span');
        cell.className = 'cal-cell';
        if (week === 52 && day === 4) {
            cell.classList.add('level-4');
        }
        cell.style.gridColumn = `${week + 2}`;
        cell.style.gridRow = `${day + 2}`;
        calendar.appendChild(cell);
    }
}
```
